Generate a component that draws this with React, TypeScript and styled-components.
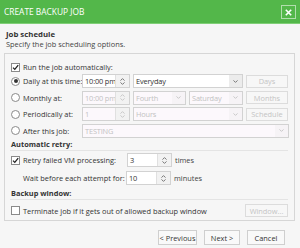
import React from 'react';
import styled, { createGlobalStyle } from 'styled-components';

const Global = createGlobalStyle`
  html, body { margin: 0; padding: 0; }
  body {
    width: 300px;
    height: 248px;
    overflow: hidden;
    background: #f6f6f6;
    font-family: "Open Sans", "Noto Sans", sans-serif;
    font-size: 7.4px;
    color: #333;
  }
`;

const Dialog = styled.div`
  width: 300px;
  height: 248px;
  display: flex;
  flex-direction: column;
  background: #f6f6f6;
`;

const Header = styled.div`
  height: 24px;
  background: #53b74a;
  border-bottom: 1px solid #7fcf76;
  box-sizing: border-box;
  display: flex;
  align-items: center;
  justify-content: space-between;
  padding: 0 4px 0 4px;
  color: #fff;
  font-size: 8.4px;
`;

const CloseButton = styled.div`
  width: 13px;
  height: 12px;
  border: 1px solid rgba(255, 255, 255, 0.55);
  display: flex;
  align-items: center;
  justify-content: center;
  margin-top: 1px;
`;

const Intro = styled.div`
  padding: 5px 6px 0 6px;
  height: 29px;
  box-sizing: border-box;
`;

const Title = styled.div`
  font-weight: 700;
  line-height: 10px;
  font-size: 7.8px;
`;

const Subtitle = styled.div`
  line-height: 10px;
  color: #444;
`;

const Panel = styled.div`
  margin: 0 5px 0 4px;
  height: 168px;
  box-sizing: border-box;
  border: 1px solid #d6d6d6;
  padding: 7px 6px 0 5px;
  display: flex;
  flex-direction: column;
`;

const Row = styled.div<{ $h?: number; $mt?: number }>`
  display: flex;
  align-items: center;
  height: ${p => p.$h ?? 14}px;
  margin-top: ${p => p.$mt ?? 0}px;
  flex-shrink: 0;
`;

const Label = styled.span<{ $w?: number; $indent?: number }>`
  width: ${p => (p.$w ? `${p.$w}px` : 'auto')};
  padding-left: ${p => p.$indent ?? 0}px;
  box-sizing: border-box;
  flex-shrink: 0;
  white-space: nowrap;
  color: #333;
`;

const Box = styled.span`
  width: 7px;
  height: 7px;
  border: 1px solid #8a8a8a;
  background: #fff;
  margin-left: 1px;
  margin-right: 3px;
  flex-shrink: 0;
  display: flex;
  align-items: center;
  justify-content: center;
`;

const Radio = styled.span<{ $on?: boolean }>`
  width: 7px;
  height: 7px;
  border-radius: 50%;
  border: 1px solid #8a8a8a;
  background: #fff;
  margin-left: 1px;
  margin-right: 3px;
  flex-shrink: 0;
  display: flex;
  align-items: center;
  justify-content: center;
  &::after {
    content: '';
    width: 4px;
    height: 4px;
    border-radius: 50%;
    background: ${p => (p.$on ? '#333' : 'transparent')};
  }
`;

const Field = styled.div<{ $w: number; $dim?: boolean }>`
  width: ${p => p.$w}px;
  height: 14px;
  box-sizing: border-box;
  border: 1px solid #d2d2d2;
  background: ${p => (p.$dim ? '#fcf8fc' : '#fff')};
  color: ${p => (p.$dim ? '#c2c2c2' : '#333')};
  display: flex;
  align-items: stretch;
  flex-shrink: 0;
  margin-right: 3px;
`;

const FieldText = styled.span`
  flex: 1;
  padding-left: 2px;
  display: flex;
  align-items: center;
  white-space: nowrap;
  overflow: hidden;
  letter-spacing: -0.15px;
`;

const Spin = styled.span`
  width: 13px;
  border-left: 1px solid #e0e0e0;
  background: #f2f2f2;
  display: flex;
  flex-direction: column;
  align-items: center;
  justify-content: center;
  gap: 1px;
  flex-shrink: 0;
`;

const Arrow = styled.span<{ $dim?: boolean }>`
  width: 13px;
  background: ${p => (p.$dim ? '#f6f3f6' : '#ececec')};
  display: flex;
  align-items: center;
  justify-content: center;
  flex-shrink: 0;
`;

const SideButton = styled.div`
  width: 43px;
  height: 13px;
  box-sizing: border-box;
  border: 1px solid #dcdcdc;
  background: #f7f7f7;
  color: #c4c4c4;
  display: flex;
  align-items: center;
  justify-content: center;
  margin-left: auto;
  white-space: nowrap;
`;

const Section = styled.div<{ $mt: number }>`
  margin-top: ${p => p.$mt}px;
  height: 12px;
  line-height: 12px;
  font-weight: 700;
  border-bottom: 1px solid #e4e4e4;
  flex-shrink: 0;
  padding-left: 1px;
`;

const Unit = styled.span`
  color: #444;
`;

const Footer = styled.div`
  display: flex;
  justify-content: flex-end;
  gap: 7px;
  padding: 9px 15px 0 0;
`;

const FootButton = styled.div<{ $w: number }>`
  width: ${p => p.$w}px;
  height: 15px;
  box-sizing: border-box;
  border: 1px solid #cfcfcf;
  background: #f9f9f9;
  display: flex;
  align-items: center;
  justify-content: center;
  color: #333;
  white-space: nowrap;
`;

const Chevron = ({ up, dim }: { up?: boolean; dim?: boolean }) => (
  <svg width="5" height="3" viewBox="0 0 5 3">
    <path
      d={up ? 'M0.5 2.6 L2.5 0.6 L4.5 2.6' : 'M0.5 0.4 L2.5 2.4 L4.5 0.4'}
      fill="none"
      stroke={dim ? '#c8c8c8' : '#777'}
      strokeWidth="1"
    />
  </svg>
);

const Check = () => (
  <svg width="7" height="7" viewBox="0 0 7 7">
    <path d="M1 3.6 L2.8 5.4 L6.2 1.2" fill="none" stroke="#222" strokeWidth="1.3" />
  </svg>
);

const Spinner = ({ dim }: { dim?: boolean }) => (
  <Spin>
    <Chevron up dim={dim} />
    <Chevron dim={dim} />
  </Spin>
);

const Select = ({ w, text, dim }: { w: number; text: string; dim?: boolean }) => (
  <Field $w={w} $dim={dim}>
    <FieldText>{text}</FieldText>
    <Arrow $dim={dim}>
      <Chevron dim={dim} />
    </Arrow>
  </Field>
);

const Number = ({ w, text, dim }: { w: number; text: string; dim?: boolean }) => (
  <Field $w={w} $dim={dim}>
    <FieldText>{text}</FieldText>
    <Spinner dim={dim} />
  </Field>
);

export default function App() {
  return (
    <Dialog>
      <Global />
      <Header>
        <span>CREATE BACKUP JOB</span>
        <CloseButton>
          <svg width="7" height="7" viewBox="0 0 7 7">
            <path d="M0.8 0.8 L6.2 6.2 M6.2 0.8 L0.8 6.2" stroke="#fff" strokeWidth="1.6" />
          </svg>
        </CloseButton>
      </Header>
      <Intro>
        <Title>Job schedule</Title>
        <Subtitle>Specify the job scheduling options.</Subtitle>
      </Intro>
      <Panel>
        <Row $h={12}>
          <Box>
            <Check />
          </Box>
          <Label>Run the job automatically:</Label>
        </Row>
        <Row $mt={1}>
          <Radio $on />
          <Label $w={59}>Daily at this time:</Label>
          <Number w={48} text="10:00 pm" />
          <Select w={110} text="Everyday" />
          <SideButton>Days</SideButton>
        </Row>
        <Row $mt={2.5}>
          <Radio />
          <Label $w={59}>Monthly at:</Label>
          <Number w={48} text="10:00 pm" dim />
          <Select w={53} text="Fourth" dim />
          <Select w={54} text="Saturday" dim />
          <SideButton>Months</SideButton>
        </Row>
        <Row $mt={2.5}>
          <Radio />
          <Label $w={59}>Periodically at:</Label>
          <Number w={48} text="1" dim />
          <Select w={110} text="Hours" dim />
          <SideButton>Schedule</SideButton>
        </Row>
        <Row $mt={2.5}>
          <Radio />
          <Label $w={59}>After this job:</Label>
          <Select w={207} text="TESTING" dim />
        </Row>
        <Section $mt={0.5}>Automatic retry:</Section>
        <Row $mt={2}>
          <Box>
            <Check />
          </Box>
          <Label $w={104}>Retry failed VM processing:</Label>
          <Number w={45} text="3" />
          <Unit>times</Unit>
        </Row>
        <Row $mt={4}>
          <Label $w={116} $indent={13}>
            Wait before each attempt for:
          </Label>
          <Number w={45} text="10" />
          <Unit>minutes</Unit>
        </Row>
        <Section $mt={2}>Backup window:</Section>
        <Row $mt={4} $h={13}>
          <Box />
          <Label>Terminate job if it gets out of allowed backup window</Label>
          <SideButton>Window...</SideButton>
        </Row>
      </Panel>
      <Footer>
        <FootButton $w={39}>&lt; Previous</FootButton>
        <FootButton $w={36}>Next &gt;</FootButton>
        <FootButton $w={38}>Cancel</FootButton>
      </Footer>
    </Dialog>
  );
}
